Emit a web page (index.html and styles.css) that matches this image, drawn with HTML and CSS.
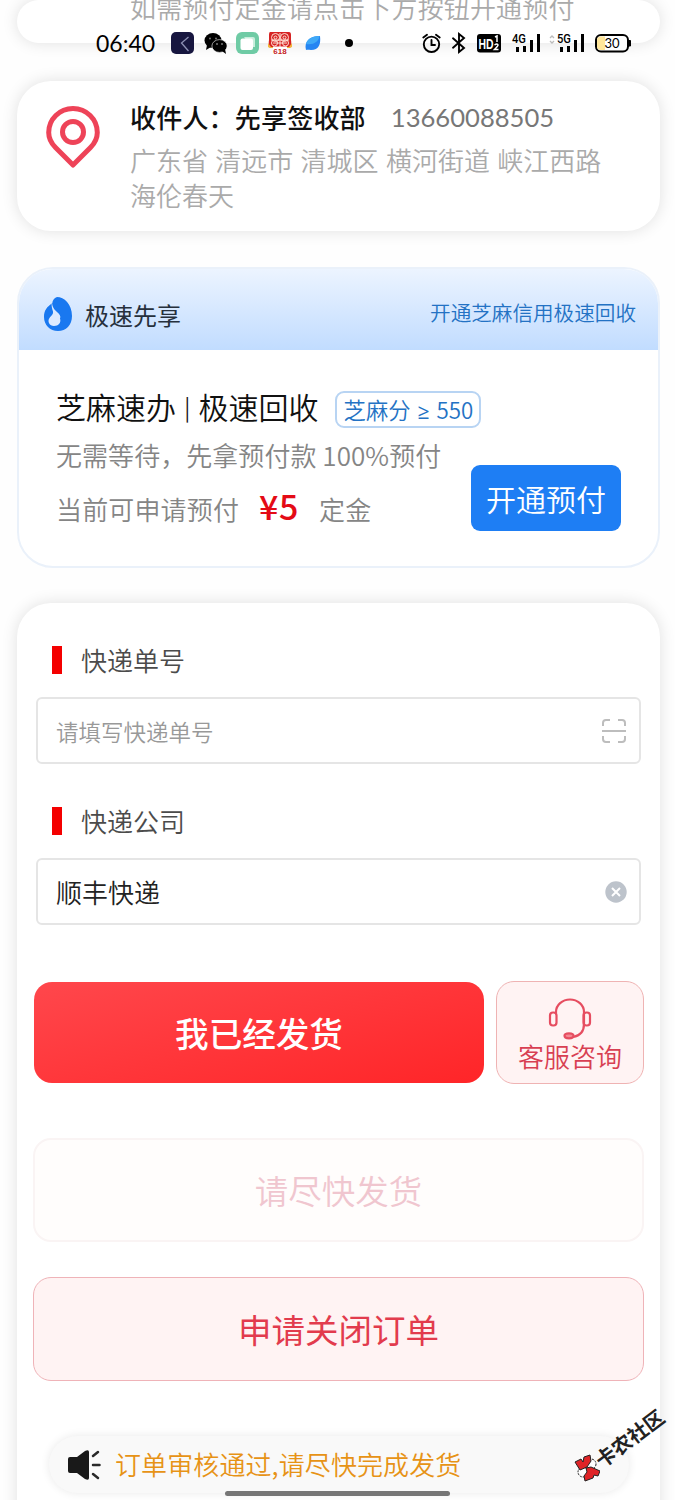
FILE: index.html
```html
<!DOCTYPE html>
<html lang="zh-CN">
<head>
<meta charset="utf-8">
<title>订单</title>
<link rel="stylesheet" href="styles.css">
</head>
<body>
<div class="screen">
  <header class="status">
    <span class="clock">06:40</span>
    <svg class="apps" width="152" height="26" viewBox="0 0 152 26">
      <rect x="1" y="2" width="23" height="22" rx="5" fill="#17163f"/>
      <path d="M18.500 7l-7 6 7 8" fill="none" stroke="#8d91b4" stroke-width="1.300"/>
      <ellipse cx="43" cy="10.500" rx="8.500" ry="7.500"/><path d="M37 15l-1 5 5-3z"/>
      <ellipse cx="49.500" cy="16" rx="7.600" ry="6.400" stroke="#fff" stroke-width=".6"/><path d="M52 21l4 3-1-5z"/>
      <g fill="#777"><circle cx="40" cy="8.500" r="1"/><circle cx="46" cy="8.500" r="1"/><circle cx="47" cy="14" r="1"/><circle cx="52" cy="14" r="1"/></g>
      <rect x="66" y="2" width="23" height="22" rx="6" fill="#6fcba5"/>
      <path d="M74 7h9q2 0 2 2v8h-4z" fill="#c9eedd"/><rect x="70.500" y="8.500" width="12.500" height="11.500" rx="2" fill="#fff"/>
      <path d="M100 2h19q2 0 2 3v5q1 5-1 8h-20q-2-3-1-8V5q0-3 1-3z" fill="#d62323"/>
      <path d="M98 13l3 4h18l3-4v4q-2 1-3 1h-18q-2 0-3-1z" fill="#f3b73d"/>
      <g fill="none" stroke="#ffe1d5" stroke-width="1"><circle cx="105.500" cy="7.500" r="4"/><circle cx="114.500" cy="7.500" r="4"/><circle cx="105.500" cy="7.500" r="1.500"/><circle cx="114.500" cy="7.500" r="1.500"/><circle cx="104.500" cy="13" r="3"/><circle cx="115.500" cy="13" r="3"/><path d="M110 3v14M101 10h18M103 13h14"/></g>
      <rect x="103" y="16.500" width="14" height="7.500" fill="#fff"/>
      <text x="110" y="23.500" text-anchor="middle" class="mini618">618</text>
      <path d="M136 20c-2-8 3-14 14-14 1 8-1 14-9 14-2 0-3-.5-5 0z" fill="#2585f2"/>
      <path d="M136 14c2-6 6-7.500 13.500-8-1 6-6 9-13.500 8z" fill="#3fa9f7"/>
    </svg>
    <span class="dot"></span>
    <svg class="system" width="214" height="26" viewBox="0 0 214 26">
      <g fill="none" stroke="#000" stroke-width="1.900" stroke-linecap="round">
        <circle cx="11.500" cy="14.300" r="7.700"/><path d="M11.500 10v5h3.500M3.300 7.500L7 4.800M19.700 7.500L16 4.800"/>
        <path d="M33 8.300l11 9.700-5 4V4l5 4-11 9.700"/>
      </g>
      <rect x="57" y="4" width="24" height="18.500" rx="3"/>
      <text x="58.500" y="18.500" class="hd" textLength="15" lengthAdjust="spacingAndGlyphs">HD</text>
      <path d="M75 7l2-1v6M74.500 15q3-2 3.500 0 0 1-3.500 4.500h4" fill="none" stroke="#fff" stroke-width="1.500"/>
      <text x="92" y="13" class="net" textLength="14" lengthAdjust="spacingAndGlyphs">4G</text>
      <path d="M96 17h3v5h-3zM103 16h3v6h-3zM110 10h3v12h-3zM117 4h3v18h-3z"/>
      <path d="M130 8l2-2 2 2M130 11l2 2 2-2" fill="none" stroke="#bbb" stroke-width="1.300"/>
      <text x="137" y="13" class="net" textLength="14" lengthAdjust="spacingAndGlyphs">5G</text>
      <path d="M140 17h3v5h-3zM147 16h3v6h-3zM154 10h3v12h-3zM161 4h3v18h-3z"/>
      <rect x="176" y="5" width="32" height="16.500" rx="5" fill="#fff" stroke="#000" stroke-width="2"/>
      <path d="M181 6.500h4v13.500h-4q-4 0-4-4v-5.500q0-4 4-4z" fill="#ffe69a"/>
      <path d="M209 10.500h1.500v5.500H209z" stroke="#000" stroke-linejoin="round"/>
      <text x="192" y="18" text-anchor="middle" class="bat">30</text>
    </svg>
  </header>

  <section class="card tip">如需预付定金请点击下方按钮开通预付</section>

  <section class="card address">
    <svg class="pin" width="60" height="66" viewBox="0 0 60 66">
      <g fill="none" stroke="#ee4358" stroke-width="5" stroke-linejoin="round"><path d="M30 61L12.500 43.500C8 39 5.700 34 5.700 28.500a24.300 24 0 0 1 48.600 0c0 5.500-2.300 10.500-6.800 15z"/><circle cx="30" cy="28" r="10.500"/></g>
    </svg>
    <div>
      <div class="who">收件人：先享签收部<span class="phone">13660088505</span></div>
      <div class="where">广东省 清远市 清城区 横河街道 峡江西路<br>海伦春天</div>
    </div>
  </section>

  <section class="sesame">
    <div class="sesame-head">
      <svg width="30" height="36" viewBox="0 0 30 36"><path d="M14 1C11 2 9.500 4.500 9.300 7 4 11 1 14 1 21c0 8 6 14 14 14s14-6 14-15C29 8 21 1 14 1z" fill="#1978f0"/><path d="M9 5c0 5 1.500 8 5 11 3 2.500 4 4.500 3 6.500 1.500 4-1.500 7.500-6 7.500s-7-4.500-4.500-8c2-3 4-3.500 3.500-6.500C9 12.500 8 9 9 5z" fill="#dceaff"/></svg>
      <b>极速先享</b><span>开通芝麻信用极速回收</span>
    </div>
    <div class="sesame-body">
      <div class="headline"><span class="title">芝麻速办 <i>|</i> 极速回收</span><span class="score">芝麻分 <i>≥</i> 550</span></div>
      <div class="offer">
        <div class="lines">
          <div>无需等待，先拿预付款 100%预付</div>
          <div class="amount">当前可申请预付<b>¥5</b>定金</div>
        </div>
        <button class="open">开通预付</button>
      </div>
    </div>
  </section>

  <section class="card form">
    <div class="label">快递单号</div>
    <div class="field"><span class="hint">请填写快递单号</span>
      <svg width="26" height="26" viewBox="0 0 26 26"><path d="M2 8V5q0-3 3-3h4M17 2h4q3 0 3 3v3M24 18v3q0 3-3 3h-4M9 24H5q-3 0-3-3v-3M1 13h24" fill="none" stroke="#bdbdbd" stroke-width="2"/></svg>
    </div>
    <div class="label">快递公司</div>
    <div class="field"><span>顺丰快递</span>
      <svg width="22" height="22" viewBox="0 0 22 22"><circle cx="11" cy="11" r="10.700" fill="#bdc3cb"/><path d="M7 7l8 8M15 7l-8 8" stroke="#fff" stroke-width="2"/></svg>
    </div>
    <div class="actions">
      <button class="sent">我已经发货</button>
      <button class="service">
        <svg width="44" height="42" viewBox="0 0 44 42"><g fill="none" stroke="#e64d60" stroke-width="2.200"><path d="M8 15v-1a14 12.500 0 0 1 28 0v12q0 11-11 13"/><rect x="2" y="14.500" width="6.500" height="13" rx="3"/><rect x="35.500" y="14.500" width="6.500" height="13" rx="3"/><ellipse cx="21" cy="37.800" rx="4.500" ry="2.500" fill="#f48994"/></g></svg>
        <span>客服咨询</span>
      </button>
    </div>
    <button class="wide urge">请尽快发货</button>
    <button class="wide close">申请关闭订单</button>
  </section>

  <div class="notice">
    <svg width="34" height="34" viewBox="0 0 34 34"><path d="M3 9h7l8-6q4-2 4 1v26q0 3-4 1l-8-6H3q-2 0-2-2V11q0-2 2-2z" fill="#191919"/><path d="M26 8l5-4M26 17h6.500M26 26l5 4" stroke="#292929" stroke-width="2.500" stroke-linecap="round"/></svg>
    <span>订单审核通过,请尽快完成发货</span>
  </div>
  <div class="homebar"></div>
  <div class="mark">
    <svg width="26" height="28" viewBox="0 0 26 28"><g stroke="#222" stroke-width="1"><circle cx="17" cy="10" r="5" fill="#fff" stroke-dasharray="2 1"/><circle cx="9" cy="18" r="5" fill="#fff" stroke-dasharray="2 1"/><path d="M1 8l6-3 2 3 1-5 6-2 1 6-4 6-7 3zM12 14l5-1 9 4-2 5-4-1-1 3-8 3-1-5 3-4z" fill="#df2427"/></g></svg>
    <span>卡农社区</span>
  </div>
</div>
</body>
</html>
```
FILE: styles.css
```css
* { box-sizing: border-box; }
body {
  margin: 0;
  background: #fefefe;
  font-family: "Noto Sans CJK SC", sans-serif;
  font-weight: 350;
  font-size: 26px;
}
button { font: inherit; padding: 0; border: 0; }
i { font-style: normal; }
svg { display: block; flex: none; }
.screen {
  position: relative;
  width: 675px;
  height: 1500px;
  overflow: hidden;
  padding: 0 15px 0 17px;
}
.card {
  background: #fff;
  border-radius: 34px;
  box-shadow: 0 0 16px rgba(0, 0, 0, .12);
}

/* status bar floats over the scrolled page */
.status {
  position: absolute;
  z-index: 2;
  top: 30px;
  left: 0;
  width: 675px;
  height: 26px;
  padding-left: 96px;
  display: flex;
  align-items: center;
}
.clock { width: 74px; font: 23px/26px Lato, sans-serif; color: #000; }
.dot { width: 8px; height: 8px; border-radius: 50%; background: #000; margin: 0 71px 0 23px; }
.system { margin-left: -4px; }
.mini618 { font: bold 8px "Liberation Sans", sans-serif; fill: #c51d1d; }
.hd { font: bold 15px "Liberation Sans", sans-serif; fill: #fff; }
.net { font: 500 12px Roboto, sans-serif; }
.bat { font: 13px Lato, sans-serif; }

.tip { width: 643px; height: 43px; padding-left: 113px; line-height: 14px; color: #aaa; letter-spacing: .15px; }

.address { display: flex; width: 643px; height: 150px; margin-top: 38px; padding: 18px 0 0 26px; }
.pin { margin: 5px 27px 0 0; }
.who { height: 36px; line-height: 36px; font-weight: 500; color: #111; letter-spacing: .2px; white-space: nowrap; }
.phone { position: relative; top: -1px; margin-left: 25px; font: 25.600px Lato, sans-serif; letter-spacing: 0; color: #777; }
.where { line-height: 35px; margin-top: 7px; color: #aaa; word-spacing: 1.500px; }

.sesame {
  width: 643px;
  height: 301px;
  margin: 36px 0 0;
  border: 2px solid #eaf1fa;
  border-radius: 36px;
  overflow: hidden;
  background: #fff;
}
.sesame-head {
  height: 81px;
  display: flex;
  align-items: center;
  padding: 9px 22px 0 24px;
  background: linear-gradient(#ecf4ff, #c1dcff);
}
.sesame-head b { margin-left: 12px; font-size: 24px; font-weight: 400; color: #26303c; line-height: 30px; position: relative; top: 1px; }
.sesame-head span { margin-left: auto; font-size: 20.600px; color: #2372c4; line-height: 30px; position: relative; top: -2px; }
.sesame-body { padding: 39px 37px 0; }
.headline { display: flex; align-items: center; height: 40px; font-size: 30px; line-height: 36px; color: #111; }
.title { position: relative; top: -2px; }
.title i { position: relative; top: -3px; display: inline-block; font-size: 23px; width: 9px; text-align: center; }
.score { width: 146px; height: 37px; margin-left: 17px; border: 2px solid #b8d4f3; border-radius: 9px; font-size: 22.300px; line-height: 32px; text-align: center; color: #2372c4; white-space: nowrap; }
.score i { display: inline-block; width: 16px; font: 21px "Open Sans", sans-serif; line-height: 22px; text-align: center; }
.offer { display: flex; justify-content: space-between; color: #858585; }
.lines { line-height: 54px; margin-top: -1px; white-space: nowrap; letter-spacing: .05px; }
.amount { display: flex; letter-spacing: .15px; }
.amount b { width: 80px; padding-left: 20px; font-size: 34px; font-weight: 500; line-height: 48px; letter-spacing: .500px; color: #e40b16; }
.open { width: 150px; height: 66px; margin: 36px 0 0 -40px; border-radius: 9px; background: #1e7ef4; color: #fff; font-size: 30px; line-height: 62px; flex: none; position: relative; left: 0; }

.form { width: 643px; height: 960px; margin-top: 35px; padding: 38px 16px 0 19px; }
.label { display: flex; align-items: center; height: 38px; padding-left: 16px; line-height: 34px; color: #4b4b4b; }
.label::before { content: ""; width: 10px; height: 28px; margin-right: 19px; background: #f40000; }
.field { display: flex; align-items: center; justify-content: space-between; width: 605px; height: 67px; margin: 18px 0 38px; padding: 0 12px 0 18px; border: 2px solid #e5e5e5; border-radius: 6px; color: #222; }
.hint { font-size: 22.500px; color: #999; }
.actions { display: flex; width: 611px; margin: 56px 0 0 -3px; padding-left: 1px; align-items: center; justify-content: space-between; }
.sent { width: 450px; height: 101px; border-radius: 18px; background: linear-gradient(165deg, #ff474c, #ff2528); color: #fff; font-size: 33.600px; font-weight: 500; }
.service { width: 148px; height: 103px; display: flex; flex-direction: column; align-items: center; border: 1px solid #efb3b3; border-radius: 18px; background: #fff3f3; color: #d83f52; padding-top: 16px; }
.service span { line-height: 34px; margin-top: -1px; }
.wide { display: block; width: 611px; height: 104px; margin-left: -3px; border-radius: 18px; font-size: 33.500px; line-height: 98px; }
.urge { margin-top: 54px; border: 2px solid #faf4f4; background: #fffdfc; color: #f0c6cf; }
.close { margin-top: 35px; border: 1px solid #efb3b8; background: #fff3f3; color: #e23b4d; font-weight: 400; }

/* fixed layers */
.notice { position: absolute; left: 49px; top: 1436px; width: 580px; height: 57px; padding-left: 18px; border-radius: 29px; background: #f9f9f9; box-shadow: 0 0 10px rgba(0, 0, 0, .09); display: flex; align-items: center; color: #e79316; }
.notice span { margin: -2px 0 0 14px; line-height: 38px; letter-spacing: .1px; }
.homebar { position: absolute; left: 225px; top: 1491px; width: 225px; height: 5px; border-radius: 3px; background: #777; }
.mark { position: absolute; left: 574px; top: 1454px; color: #222; }
.mark span { position: absolute; left: 15px; top: -29px; width: 84px; font-size: 20px; font-weight: 700; line-height: 24px; transform: rotate(-37deg); white-space: nowrap; }
```
